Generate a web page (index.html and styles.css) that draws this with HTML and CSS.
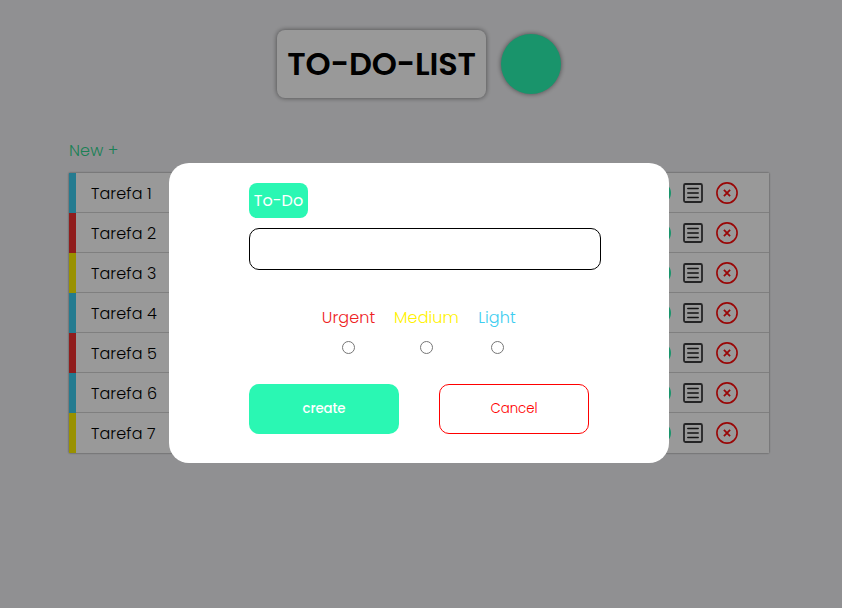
FILE: index.html
```html
<!DOCTYPE html>
<html lang="pt">
<head>
<meta charset="utf-8">
<title>To-Do-List</title>
<link rel="stylesheet" href="styles.css">
</head>
<body>
<svg width="0" height="0" class="defs">
  <symbol id="done" viewBox="0 0 22 22"><circle cx="11" cy="11" r="10" fill="none" stroke="#2af7b3" stroke-width="2"/><path d="M7 11l3 3 5-6" fill="none" stroke="#2af7b3" stroke-width="2"/></symbol>
  <symbol id="list" viewBox="0 0 20 20"><rect x="1" y="1" width="18" height="18" rx="1.4" fill="none" stroke="#3c3c3e" stroke-width="1.8"/><path d="M4.8 5.5h10.4M4.8 10h10.4M4.8 14.5h10.4" fill="none" stroke="#222" stroke-width="1.5" stroke-linecap="round"/></symbol>
  <symbol id="remove" viewBox="0 0 22 22"><circle cx="11" cy="11" r="10.1" fill="none" stroke="#ff0a0a" stroke-width="1.6"/><path d="M7.9 7.9l6.2 6.2M14.1 7.9l-6.2 6.2" fill="none" stroke="#ff0a0a" stroke-width="1.8"/></symbol>
</svg>
<header class="header">
  <h1 class="title"><span>TO-DO-LIST</span></h1>
  <div class="dot"></div>
</header>
<main class="board">
  <a class="new">New +</a>
  <ul class="tasks">
    <li class="task light"><span class="name">Tarefa 1</span><svg class="i22"><use href="#done"/></svg><svg class="i20"><use href="#list"/></svg><svg class="i22"><use href="#remove"/></svg></li>
    <li class="task urgent"><span class="name">Tarefa 2</span><svg class="i22"><use href="#done"/></svg><svg class="i20"><use href="#list"/></svg><svg class="i22"><use href="#remove"/></svg></li>
    <li class="task medium"><span class="name">Tarefa 3</span><svg class="i22"><use href="#done"/></svg><svg class="i20"><use href="#list"/></svg><svg class="i22"><use href="#remove"/></svg></li>
    <li class="task light"><span class="name">Tarefa 4</span><svg class="i22"><use href="#done"/></svg><svg class="i20"><use href="#list"/></svg><svg class="i22"><use href="#remove"/></svg></li>
    <li class="task urgent"><span class="name">Tarefa 5</span><svg class="i22"><use href="#done"/></svg><svg class="i20"><use href="#list"/></svg><svg class="i22"><use href="#remove"/></svg></li>
    <li class="task light"><span class="name">Tarefa 6</span><svg class="i22"><use href="#done"/></svg><svg class="i20"><use href="#list"/></svg><svg class="i22"><use href="#remove"/></svg></li>
    <li class="task medium"><span class="name">Tarefa 7</span><svg class="i22"><use href="#done"/></svg><svg class="i20"><use href="#list"/></svg><svg class="i22"><use href="#remove"/></svg></li>
  </ul>
</main>
<div class="overlay">
  <form class="modal">
    <label class="tag" for="todo">To-Do</label>
    <input class="field" id="todo" type="text">
    <div class="levels">
      <label class="level l-urgent"><span>Urgent</span><input type="radio" name="level"></label>
      <label class="level l-medium"><span>Medium</span><input type="radio" name="level"></label>
      <label class="level l-light"><span>Light</span><input type="radio" name="level"></label>
    </div>
    <div class="actions">
      <button class="btn create" type="button">create</button>
      <button class="btn cancel" type="button">Cancel</button>
    </div>
  </form>
</div>
</body>
</html>
```
FILE: styles.css
```css
* { box-sizing: border-box; margin: 0; padding: 0; }
body { background: #f1f1f4; font-family: Poppins, Inter, sans-serif; font-size: 16px; font-weight: 300; color: #000; height: 608px; overflow: hidden; }
.defs { position: absolute; }
.header { display: flex; align-items: center; padding: 30px 0 0 277px; gap: 15px; }
.title { width: 209px; height: 68px; border-radius: 8px; background: #fff; box-shadow: 0 0 5px rgba(0,0,0,.5); display: flex; align-items: center; justify-content: center; font-size: 32px; font-weight: 600; letter-spacing: -.2px; white-space: nowrap; }
.dot { width: 60px; height: 60px; border-radius: 50%; background: #2af7b3; box-shadow: 0 0 5px rgba(0,0,0,.5); }
.board { width: 700px; margin: 41px 0 0 69px; }
.new { display: block; height: 24px; line-height: 24px; margin-bottom: 10px; color: #2fd68f; letter-spacing: .1px; }
.tasks { list-style: none; background: #fff; box-shadow: 0 0 2px rgba(0,0,0,.5); }
.task { height: 40px; display: flex; align-items: center; padding-right: 31px; border-left: 7px solid; background: linear-gradient(#d4d4d4, #d4d4d4) bottom / 100% 1px no-repeat; background-origin: padding-box; }
.task:last-child { background: none; }
.name { flex: 1; padding-left: 15px; color: #000; letter-spacing: .12px; }
.task.light { border-color: #3dcdf0; }
.task.urgent { border-color: #f13030; }
.task.medium { border-color: #fff200; }
.i22 { width: 22px; height: 22px; }
.i20 { width: 20px; height: 20px; margin: 0 13px 0 12px; }
.overlay { position: fixed; inset: 0; background: rgba(0,0,0,.4); padding: 163px 0 0 169px; }
.modal { width: 500px; height: 300px; background: #fff; border-radius: 20px; padding: 20px 68px 0 80px; display: flex; flex-direction: column; align-items: flex-start; }
.tag { width: 59px; height: 35px; line-height: 35px; text-align: center; border-radius: 8px; background: #2af7b3; color: #fff; font-weight: 400; }
.field { width: 352px; height: 42px; margin-top: 10px; border: 1px solid #000; border-radius: 10px; outline: 0; }
.levels { display: flex; margin: 36px 0 0 72px; gap: 18px; }
.level { display: flex; flex-direction: column; align-items: center; line-height: 24px; letter-spacing: .1px; }
.level input { width: 13px; height: 13px; margin-top: 11px; }
.l-urgent { width: 55px; color: #ee2222; }
.l-medium { width: 65px; color: #fff200; }
.l-light { width: 40px; color: #3dcdf0; }
.actions { display: flex; gap: 40px; margin-top: 30px; }
.btn { width: 150px; height: 50px; border-radius: 10px; font-family: inherit; font-size: 13.33px; }
.create { border: 0; background: #2af7b3; color: #fff; font-weight: 500; letter-spacing: -.1px; }
.cancel { border: 1px solid #f00; background: #fff; color: #f00; font-weight: 300; }
```
